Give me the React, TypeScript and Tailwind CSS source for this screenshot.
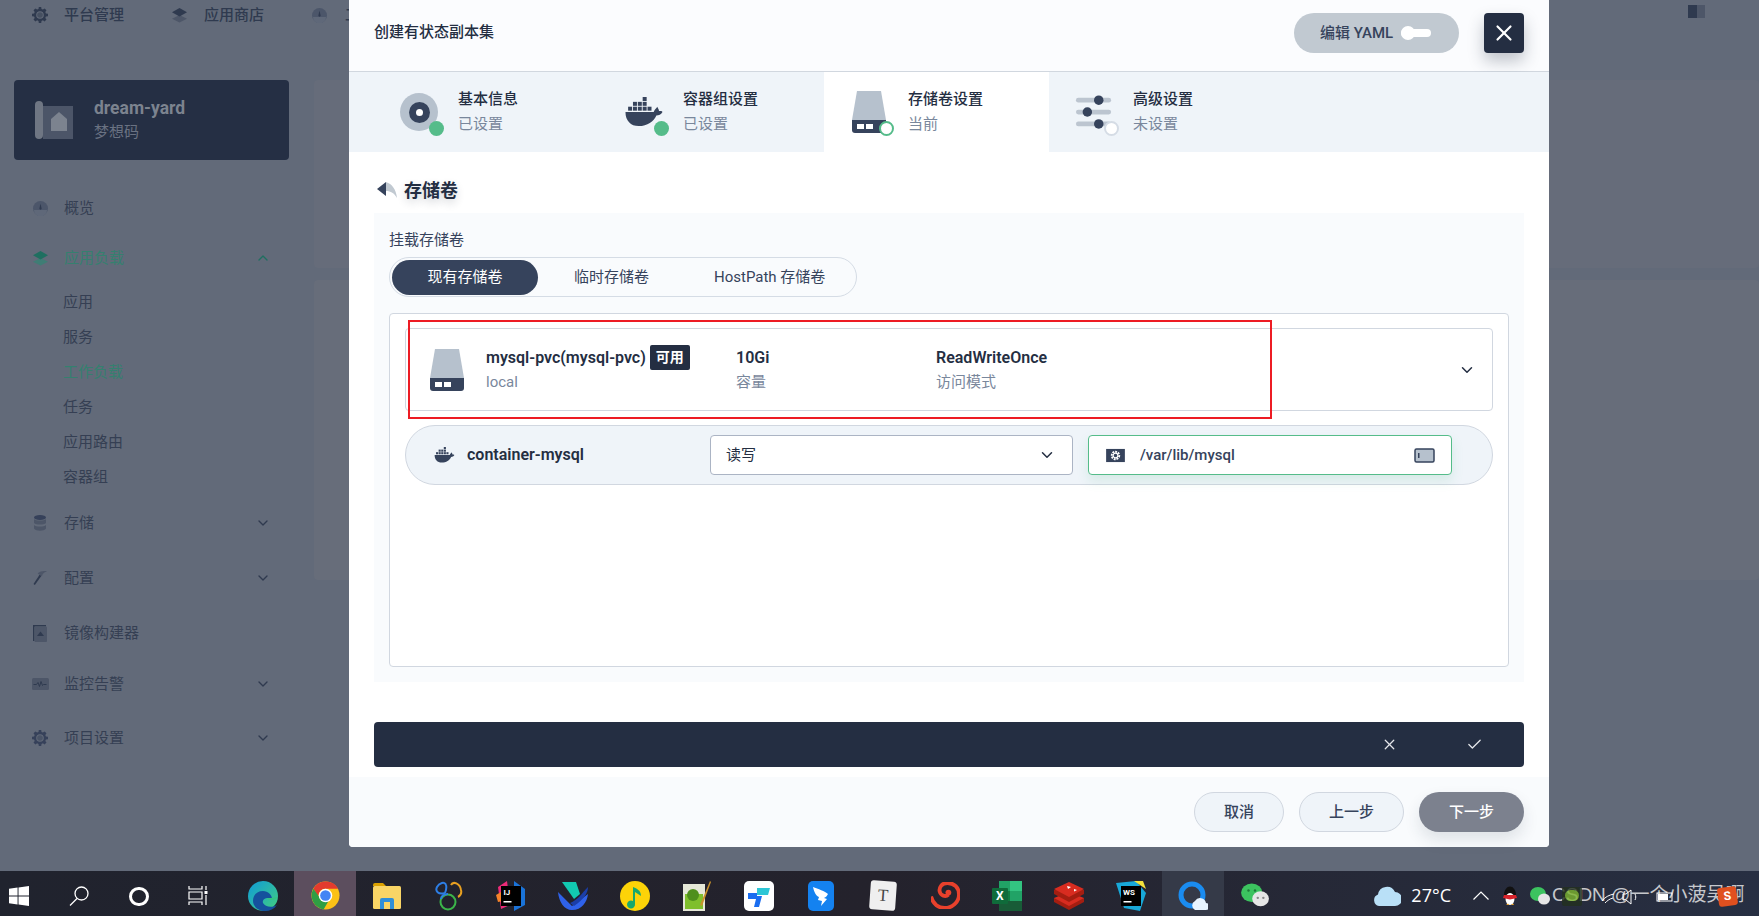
import { ChevronDown, ChevronUp, X, Check } from "lucide-react"

const subNav = [
  { label: "应用" },
  { label: "服务" },
  { label: "工作负载", active: true },
  { label: "任务" },
  { label: "应用路由" },
  { label: "容器组" },
]

function Gear({ className }: { className: string }) {
  return (
    <svg viewBox="0 0 16 16" className={className} fill="currentColor">
      <path fillRule="evenodd" d="M6.8 0h2.4l.3 2 1.4.6L12.600 1.400l1.900 1.900-1.200 1.700.6 1.400 2.100.4v2.400l-2.100.3-.6 1.400 1.200 1.700-1.900 1.900-1.700-1.200-1.400.6-.3 2.100H6.800l-.3-2.100-1.400-.6-1.700 1.200-1.900-1.900 1.200-1.700-.6-1.400L0 9.200V6.800l2.100-.4.6-1.400-1.200-1.700 1.900-1.900 1.700 1.200 1.400-.6zM8 4.200a3.800 3.800 0 100 7.600 3.800 3.800 0 000-7.600z" />
      <circle cx="8" cy="8" r="2.800" opacity=".55" />
    </svg>
  )
}

function Layers({ top, bottom }: { top: string; bottom: string }) {
  return (
    <svg viewBox="0 0 16 16" className="w-[15px] h-[15px] shrink-0">
      <path d="M8 7.500L16 11.500 8 15.500 0 11.500z" fill={bottom} />
      <path d="M8 0L16 4.500 8 9 0 4.500z" fill={top} />
    </svg>
  )
}

function Dial() {
  return (
    <svg viewBox="0 0 16 16" className="w-[15px] h-[15px] shrink-0">
      <circle cx="8" cy="8" r="8" fill="#4c566a" />
      <path d="M1 9.500h14a7 7 0 01-14 0z" fill="#5f6879" />
      <path d="M8 3l1.200 5a1.200 1.200 0 11-2.400 0z" fill="#2f3a4f" />
    </svg>
  )
}

function Docker({ className, fill = "#36435c" }: { className: string; fill?: string }) {
  return (
    <svg viewBox="0 0 44 34" className={className} fill={fill}>
      <path d="M1 17h32c1-3 3-4 4-6 1 2 2 3 2 5 2 0 3 0 4 1-2 3-4 4-7 4-3 7-10 12-20 12C7 33 1 27 1 17z" />
      <rect x="4" y="11" width="4.500" height="4.500" />
      <rect x="9.500" y="11" width="4.500" height="4.500" />
      <rect x="15" y="11" width="4.500" height="4.500" />
      <rect x="20.500" y="11" width="4.500" height="4.500" />
      <rect x="26" y="11" width="4.500" height="4.500" />
      <rect x="9.500" y="5.500" width="4.500" height="4.500" />
      <rect x="15" y="5.500" width="4.500" height="4.500" />
      <rect x="20.500" y="5.500" width="4.500" height="4.500" />
      <rect x="20.500" y="0" width="4.500" height="4.500" />
    </svg>
  )
}

function Disk({ className }: { className: string }) {
  return (
    <svg viewBox="0 0 34 42" className={className}>
      <path d="M5 0h24l5 29H0z" fill="#b6c1cd" />
      <path d="M0 29h34v10a3 3 0 01-3 3H3a3 3 0 01-3-3z" fill="#36435c" />
      <rect x="5" y="33" width="7" height="5" fill="#fff" />
      <rect x="14" y="33" width="7" height="5" fill="#fff" />
    </svg>
  )
}

function Sliders() {
  return (
    <svg viewBox="0 0 40 36" className="w-[38px] h-[36px]">
      <rect x="1" y="3" width="37" height="5" rx="2.500" fill="#bcc5d0" />
      <rect x="1" y="15.500" width="37" height="5" rx="2.500" fill="#bcc5d0" />
      <rect x="1" y="28" width="37" height="5" rx="2.500" fill="#bcc5d0" />
      <circle cx="25" cy="5.500" r="5" fill="#36435c" />
      <circle cx="13" cy="18" r="5" fill="#36435c" />
      <circle cx="25" cy="30.500" r="5" fill="#36435c" />
    </svg>
  )
}

function Step({
  title,
  sub,
  dot,
  current,
  children,
}: {
  title: string
  sub: string
  dot: "done" | "current" | "todo"
  current?: boolean
  children: React.ReactNode
}) {
  return (
    <div className={`w-[225px] h-full flex items-center pl-[22px] ${current ? "bg-white" : ""}`}>
      <div className="relative w-[46px] h-[46px] flex items-center justify-center mr-[16px]">
        {children}
        {dot === "done" && <span className="absolute right-[-2px] bottom-[-1px] w-[15px] h-[15px] rounded-full bg-[#55bc8a]" />}
        {dot === "current" && <span className="absolute right-[-2px] bottom-[-1px] w-[15px] h-[15px] rounded-full bg-white border-2 border-[#55bc8a]" />}
        {dot === "todo" && <span className="absolute right-[-2px] bottom-[-1px] w-[15px] h-[15px] rounded-full bg-white border-2 border-[#d5dce5]" />}
      </div>
      <div className="mt-[-2px]">
        <div className="text-[15px] leading-[20px] font-medium text-[#242e42]">{title}</div>
        <div className="text-[15px] leading-[20px] mt-[5px] text-[#79879c]">{sub}</div>
      </div>
    </div>
  )
}

function SideItem({ icon, label, open, className = "" }: { icon: React.ReactNode; label: string; open?: boolean; className?: string }) {
  return (
    <div className={`flex items-center pl-[32px] pr-[43px] h-[24px] ${className}`}>
      <div className="w-[16px] h-[16px] flex items-center justify-center text-[#36415a] mr-[16px]">{icon}</div>
      <span className="text-[15px] text-[#353f53]">{label}</span>
      {open !== undefined && <ChevronDown className="ml-auto w-[16px] h-[16px] text-[#2f3a4f]" strokeWidth={2} />}
    </div>
  )
}

function Sidebar() {
  return (
    <aside className="w-[314px] shrink-0">
      <div className="h-[80px] pl-[32px] flex items-start pt-[3px] text-[15px] font-medium text-[#2f3a4f] whitespace-nowrap">
        <div className="flex items-center h-[24px]">
          <Gear className="w-[16px] h-[16px] shrink-0 text-[#2f3a4f] mr-[16px]" />
          <span>平台管理</span>
          <span className="ml-[48px] mr-[17px]">
            <Layers top="#2f3a4f" bottom="#4d5668" />
          </span>
          <span>应用商店</span>
          <span className="ml-[48px] mr-[18px]">
            <Dial />
          </span>
          <span>工作台</span>
        </div>
      </div>
      <div className="mx-[14px] w-[275px] h-[80px] rounded-[4px] bg-[#252f44] flex items-center pl-[21px]">
        <svg viewBox="0 0 38 38" className="w-[38px] h-[38px] mr-[21px]">
          <path d="M8 5h30v33H8z" fill="#4c5568" />
          <path d="M0 4a4 4 0 018 0v30a4 4 0 01-4 4 4 4 0 01-4-4z" fill="#6f7683" />
          <path d="M24 11l8 7v12H16V18z" fill="#7c838f" />
        </svg>
        <div className="mt-[-1px]">
          <div className="text-[17.500px] leading-[22px] font-bold text-[#7c838f]">dream-yard</div>
          <div className="text-[15px] leading-[20px] mt-[3px] text-[#6a7282]">梦想码</div>
        </div>
      </div>
      <SideItem className="mt-[36px]" icon={<Dial />} label="概览" />
      <div className="flex items-center pl-[32px] pr-[43px] h-[24px] mt-[26px]">
        <div className="w-[16px] h-[16px] flex items-center justify-center mr-[16px]">
          <Layers top="#1f6f60" bottom="#3f7d75" />
        </div>
        <span className="text-[15px] text-[#35806f]">应用负载</span>
        <ChevronUp className="ml-auto w-[16px] h-[16px] text-[#1f6f60]" strokeWidth={2} />
      </div>
      <div className="mt-[15px] pl-[63px] flex flex-col">
        {subNav.map((item) => (
          <div key={item.label} className={`h-[35px] flex items-center text-[15px] ${item.active ? "text-[#35806f]" : "text-[#353f53]"}`}>
            {item.label}
          </div>
        ))}
      </div>
      <SideItem
        className="mt-[16px]"
        open={false}
        label="存储"
        icon={
          <svg viewBox="0 0 12 16" className="w-[12px] h-[16px]">
            <ellipse cx="6" cy="2.500" rx="6" ry="2.500" fill="#36415a" />
            <path d="M0 4c2 2 10 2 12 0v4c-2 2-10 2-12 0z" fill="#4d5668" />
            <path d="M0 10c2 2 10 2 12 0v3.500c-2 3-10 3-12 0z" fill="#4d5668" />
          </svg>
        }
      />
      <SideItem
        className="mt-[31px]"
        open={false}
        label="配置"
        icon={
          <svg viewBox="0 0 16 16" className="w-[15px] h-[16px]">
            <path d="M2 15.500l-1.500-1 6.500-10 2 1z" fill="#2f3a4f" />
            <path d="M5 3c3-2.500 7-3 10-2-3 .5-4.500 2-5.500 5L6 4z" fill="#4d5668" />
          </svg>
        }
      />
      <SideItem
        className="mt-[31px]"
        label="镜像构建器"
        icon={
          <svg viewBox="0 0 14 17" className="w-[14px] h-[17px]">
            <path d="M0 0h13v1.500H1.500V16H0z" fill="#2f3a4f" />
            <rect x="1.500" y="1.500" width="12.500" height="15.500" rx="1" fill="#4d5668" />
            <path d="M7.500 6.500l3.500 4.500H4z" fill="#2f3a4f" />
          </svg>
        }
      />
      <SideItem
        className="mt-[27px]"
        open={false}
        label="监控告警"
        icon={
          <svg viewBox="0 0 17 12" className="w-[17px] h-[12px] shrink-0">
            <rect width="17" height="12" rx="1.500" fill="#4d5668" />
            <path d="M1.500 6.500h3l1.500-2 1.500 4 1.500-5 1.500 4 1-1h3" fill="none" stroke="#2f3a4f" strokeWidth="1" />
          </svg>
        }
      />
      <SideItem className="mt-[30px]" open={false} label="项目设置" icon={<Gear className="w-[16px] h-[16px] text-[#36415a]" />} />
    </aside>
  )
}

function TaskIcon({ children, highlight }: { children: React.ReactNode; highlight?: string }) {
  return <div className={`w-[62px] h-full shrink-0 flex items-center justify-center pt-[4px] ${highlight ?? ""}`}>{children}</div>
}

function Taskbar() {
  return (
    <div className="relative h-[45px] shrink-0 flex items-center pl-[232px] bg-gradient-to-r from-[#20232e] via-[#24222c] to-[#272f42] overflow-hidden">
      <div className="absolute left-[9px] top-[15px]">
        <svg viewBox="0 0 21 21" className="w-[20px] h-[20px]" fill="#fff">
          <path d="M0 3l9-1.300v8.300H0zM10 1.500L21 0v10H10zM0 11h9v8.300L0 18zM10 11h11v10l-11-1.500z" />
        </svg>
      </div>
      <div className="absolute left-[69px] top-[15px]">
        <svg viewBox="0 0 20 20" className="w-[20px] h-[20px]" fill="none" stroke="#fff" strokeWidth="1.300">
          <circle cx="12.500" cy="7.500" r="6.500" />
          <path d="M8 12.500L1 19.500" />
        </svg>
      </div>
      <div className="absolute left-[129px] top-[16px] w-[20px] h-[19px] rounded-full border-[3px] border-white" />
      <div className="absolute left-[188px] top-[15px]">
        <svg viewBox="0 0 20 19" className="w-[20px] h-[19px]" fill="none" stroke="#fff" strokeWidth="1.200">
          <path d="M1 0v3h13V0M1 6h13v7H1zM1 19v-3h13v3M18 0v4M18 9v10" />
          <rect x="16.500" y="5" width="3" height="3" fill="#fff" stroke="none" />
        </svg>
      </div>

      {/* Edge */}
      <TaskIcon>
        <svg viewBox="0 0 30 30" className="w-[30px] h-[30px]">
          <defs>
            <linearGradient id="edge" x1="0" y1="0" x2="1" y2="1">
              <stop offset="0" stopColor="#0f9ad8" />
              <stop offset="1" stopColor="#43d07e" />
            </linearGradient>
          </defs>
          <circle cx="15" cy="15" r="15" fill="url(#edge)" />
          <path d="M15 10c-6 0-10 4-10 10 0 5 5 10 12 10 5 0 9-2 12-6-5 3-12 2-14-2-1-3 2-5 5-5 1 0 2 0 4 1 0-4-4-8-9-8z" fill="#15519d" />
          <path d="M19 17c3 0 7 0 10-1-1 3-5 3-8 3z" fill="#33c481" />
        </svg>
      </TaskIcon>
      {/* Chrome */}
      <TaskIcon highlight="bg-[#5c4e5e]">
        <svg viewBox="0 0 30 30" className="w-[29px] h-[29px]">
          <circle cx="15" cy="15" r="14.500" fill="#fbc116" />
          <path d="M15 .500A14.500 14.500 0 002.500 8L9 19a7 7 0 016-11h13A14.500 14.500 0 0015 .500z" fill="#e33b2e" />
          <path d="M2.500 8A14.500 14.500 0 0013 29.400l6.500-11A7 7 0 019 17z" fill="#2f9e44" />
          <circle cx="15" cy="15" r="7" fill="#fff" />
          <circle cx="15" cy="15" r="5.500" fill="#4285f4" />
        </svg>
      </TaskIcon>
      {/* Explorer */}
      <TaskIcon>
        <svg viewBox="0 0 28 26" className="w-[28px] h-[26px]">
          <path d="M0 2a2 2 0 012-2h8l3 3H0z" fill="#dba100" />
          <rect y="3" width="28" height="23" rx="1.500" fill="#f9d566" />
          <path d="M7 26v-9a2 2 0 012-2h10a2 2 0 012 2v9h-4v-7h-6v7z" fill="#2f8fd8" />
        </svg>
      </TaskIcon>
      {/* NetBeans-style ring */}
      <TaskIcon>
        <svg viewBox="0 0 28 30" className="w-[28px] h-[30px]" fill="none" strokeWidth="2">
          <path d="M10 12C3 14 0 10 2 6s8-6 9-2c1 3-1 8-1 8" stroke="#2d7ee5" />
          <path d="M16 4c2-4 9-2 10 5 1 4-1 6-3 7" stroke="#e8a021" />
          <circle cx="13" cy="21" r="7.500" stroke="#3bb54a" />
          <path d="M6 18c0-3 3-5 7-5" stroke="#2d7ee5" />
        </svg>
      </TaskIcon>
      {/* IntelliJ */}
      <TaskIcon>
        <svg viewBox="0 0 30 30" className="w-[30px] h-[30px]">
          <path d="M2 6l9-6 3 24-9 4z" fill="#ec2a77" />
          <path d="M0 14l5-3 2 9-5 1z" fill="#f5822a" />
          <path d="M18 0l11 8v16l-11 6z" fill="#1a73d8" />
          <rect x="5" y="5" width="20" height="20" fill="#000" />
          <text x="7.500" y="14" fontSize="8" fontWeight="700" fill="#fff" fontFamily="Roboto">IJ</text>
          <rect x="7.500" y="20" width="8" height="1.500" fill="#fff" />
        </svg>
      </TaskIcon>
      {/* Feishu-like bird */}
      <TaskIcon>
        <svg viewBox="0 0 30 28" className="w-[30px] h-[28px]">
          <path d="M4 0h14l4 12-6 5z" fill="#12c9b1" />
          <path d="M0 10l14 14 16-12c-1 8-6 16-16 16C6 28 1 20 0 10z" fill="#2f62ea" />
          <path d="M30 5c0 6-4 12-14 19l-4-3c8-3 12-10 18-16z" fill="#1b3ea8" />
        </svg>
      </TaskIcon>
      {/* QQ music */}
      <TaskIcon>
        <svg viewBox="0 0 30 30" className="w-[30px] h-[30px]">
          <circle cx="15" cy="15" r="15" fill="#fcd308" />
          <path d="M13 6v14a4 4 0 102 3V11l6 4c0-5-3-7-8-9z" fill="#18a86b" />
        </svg>
      </TaskIcon>
      {/* Notepad++ */}
      <TaskIcon>
        <svg viewBox="0 0 28 30" className="w-[28px] h-[30px]">
          <rect x="0" y="3" width="22" height="27" fill="#e6e8d8" />
          <rect x="2" y="13" width="18" height="15" fill="#7fbf2c" />
          <circle cx="10" cy="14" r="6" fill="#4f8f1c" />
          <path d="M27 0l1 1-9 24-2-1z" fill="#c8912b" />
        </svg>
      </TaskIcon>
      {/* ToDesk */}
      <TaskIcon>
        <div className="w-[30px] h-[30px] rounded-[5px] bg-white flex items-center justify-center">
          <svg viewBox="0 0 22 22" className="w-[22px] h-[22px]">
            <path d="M9 3h13l-2 7H9z" fill="#2dc6d6" />
            <path d="M0 8h9v3h5l-3 11H6l2-8H0z" fill="#1a6df0" />
          </svg>
        </div>
      </TaskIcon>
      {/* DingTalk */}
      <TaskIcon>
        <div className="w-[26px] h-[30px] rounded-[5px] bg-[#1482f0] flex items-center justify-center">
          <svg viewBox="0 0 16 20" className="w-[16px] h-[20px]" fill="#fff">
            <path d="M0 1c5 2 12 4 15 7-1 2-2 3-4 4l3 1-6 7 1-5-4-1 1-3C3 10 1 6 0 1z" />
          </svg>
        </div>
      </TaskIcon>
      {/* Typora */}
      <TaskIcon>
        <div className="w-[26px] h-[29px] rounded-[3px] bg-[#efefef] rotate-[4deg] flex items-center justify-center text-[#444] text-[17px] font-[family-name:'Liberation_Serif',serif]">
          T
        </div>
      </TaskIcon>
      {/* Swirl */}
      <TaskIcon>
        <svg viewBox="0 0 30 28" className="w-[29px] h-[27px]" fill="none">
          <path d="M0 15c2 8 8 12 14 12 8 0 15-6 15-14 0-7-5-12-12-12-6 0-9 5-8 9s6 6 9 3" stroke="#e8412c" strokeWidth="4" />
          <circle cx="18" cy="11" r="3" fill="#e8412c" />
        </svg>
      </TaskIcon>
      {/* Excel */}
      <TaskIcon>
        <svg viewBox="0 0 30 30" className="w-[30px] h-[30px]">
          <rect x="7" y="0" width="23" height="30" rx="1" fill="#107c41" />
          <rect x="18" y="0" width="12" height="10" fill="#33c481" />
          <rect x="7" y="0" width="11" height="10" fill="#21a366" />
          <rect x="18" y="10" width="12" height="10" fill="#21a366" />
          <rect x="7" y="20" width="23" height="10" fill="#185c37" />
          <rect x="0" y="7" width="16" height="16" rx="1" fill="#0f6b3a" />
          <text x="4" y="19" fontSize="12" fontWeight="700" fill="#fff" fontFamily="Roboto">X</text>
        </svg>
      </TaskIcon>
      {/* Redis */}
      <TaskIcon>
        <svg viewBox="0 0 30 28" className="w-[30px] h-[28px]">
          <path d="M0 20l15 8 15-8v-4H0z" fill="#a41e11" />
          <path d="M0 16l15-6 15 6-15 8z" fill="#d82c20" />
          <path d="M0 12l15 8 15-8V8H0z" fill="#a41e11" />
          <path d="M0 7l15-7 15 7-15 8z" fill="#d82c20" />
          <path d="M13 4l4 1-3 2zM20 7l3 1-3 1.500z" fill="#fff" />
        </svg>
      </TaskIcon>
      {/* WebStorm */}
      <TaskIcon>
        <svg viewBox="0 0 30 30" className="w-[30px] h-[30px]">
          <path d="M0 2l20-2 10 12-6 18-16-3z" fill="#18a8d8" />
          <path d="M18 0h9l3 8z" fill="#f4e23c" />
          <rect x="5" y="5" width="20" height="20" fill="#000" />
          <text x="7" y="14" fontSize="8" fontWeight="700" fill="#fff" fontFamily="Roboto">WS</text>
          <rect x="7.500" y="20" width="8" height="1.500" fill="#fff" />
        </svg>
      </TaskIcon>
      {/* QQ browser */}
      <TaskIcon highlight="bg-[#353a48]">
        <svg viewBox="0 0 30 30" className="w-[30px] h-[30px]">
          <circle cx="14" cy="14" r="11" fill="none" stroke="#1a8cf0" strokeWidth="5" />
          <path d="M17 29a5 5 0 010-9 6 6 0 0111 2 3.500 3.500 0 010 7z" fill="#e8f4ff" />
        </svg>
      </TaskIcon>
      {/* WeChat */}
      <TaskIcon>
        <svg viewBox="0 0 30 28" className="w-[30px] h-[26px]">
          <ellipse cx="11.500" cy="10.500" rx="11.500" ry="10" fill="#3cc35f" />
          <ellipse cx="21" cy="17" rx="9" ry="8" fill="#e6e6e6" />
          <circle cx="18" cy="16" r="1.300" fill="#888" />
          <circle cx="24" cy="16" r="1.300" fill="#888" />
          <circle cx="8" cy="8" r="1.300" fill="#1e7a38" />
          <circle cx="15" cy="8" r="1.300" fill="#1e7a38" />
        </svg>
      </TaskIcon>

      <div className="ml-auto flex items-center h-full pr-[9px] pt-[4px]">
        <svg viewBox="0 0 28 20" className="w-[28px] h-[20px] mr-[10px]">
          <path d="M6 20a6 6 0 01-1-11.500A9 9 0 0122 6a7 7 0 010 14z" fill="#b9e0f7" />
        </svg>
        <span className="text-[18px] text-white mr-[22px] font-[family-name:'Open_Sans',sans-serif]">27°C</span>
        <svg viewBox="0 0 16 9" className="w-[16px] h-[9px] mr-[13px]" fill="none" stroke="#fff" strokeWidth="1.200">
          <path d="M0.500 8.500L8 1l7.500 7.500" />
        </svg>
        <svg viewBox="0 0 16 20" className="w-[16px] h-[20px] mr-[12px]">
          <ellipse cx="8" cy="9" rx="6" ry="8.500" fill="#111" />
          <ellipse cx="8" cy="13" rx="4.500" ry="6" fill="#fff" />
          <path d="M2 9h12l1 3-7 1.500L1 12z" fill="#d9232b" />
          <path d="M4 19h3l-1-1.500zM9 19h3l-1-1.500z" fill="#f7a823" />
        </svg>
        <svg viewBox="0 0 20 18" className="w-[20px] h-[18px] mr-[2px]">
          <ellipse cx="8" cy="7" rx="8" ry="7" fill="#3cc35f" />
          <ellipse cx="14" cy="12" rx="6" ry="5.500" fill="#e6e6e6" />
        </svg>
        <div className="relative w-[198px] h-full flex items-center">
          <span className="text-[19px] whitespace-nowrap text-[#c6c8cc] font-[family-name:'Liberation_Sans','Noto_Sans_CJK_SC',sans-serif]">
            CSDN @一个小菠吴啊
          </span>
          <div className="absolute left-[10px] top-[12px] w-[20px] h-[19px] bg-[#23301f] rounded-[2px] opacity-80">
            <div className="w-[14px] h-[11px] m-[3px] rounded-full bg-[#7db52f]" />
          </div>
          <svg viewBox="0 0 72 16" className="absolute left-[50px] top-[14px] w-[72px] h-[16px]" fill="none" stroke="#fff" strokeWidth="1">
            <path d="M0 12c3-4 7-6 12-7M3 14c2-2 4-4 8-5" />
            <path d="M21 5h3l5-4v14l-5-4h-3z" />
            <path d="M33 5c1 2 1 4 0 6" />
            <rect x="55" y="4" width="15" height="8" />
            <rect x="56" y="5" width="10" height="6" fill="#fff" stroke="none" />
          </svg>
          <div className="absolute left-[166px] top-[12px] w-[19px] h-[19px] rounded-[3px] bg-[#e0501f] text-white text-[12px] leading-[19px] text-center font-bold rotate-[-8deg]">
            S
          </div>
        </div>
      </div>
    </div>
  )
}

function Modal() {
  return (
    <div className="absolute left-[349px] top-0 w-[1200px] h-[847px] bg-white rounded-b-[4px] flex flex-col">
      <header className="h-[72px] shrink-0 bg-[#fbfcfe] border-b border-[#d1d7df] flex items-start pt-[13px] px-[25px]">
        <span className="text-[15px] leading-[38px] font-medium text-[#242e42]">创建有状态副本集</span>
        <div className="ml-auto w-[165px] h-[40px] rounded-full bg-[#c1c9d1] flex items-center pl-[26px] text-[15px] font-medium text-[#36435c]">
          编辑 YAML
          <span className="relative ml-[8px] w-[30px] h-[8px] rounded-full bg-white">
            <span className="absolute left-0 top-[-3px] w-[14px] h-[14px] rounded-full bg-white" />
          </span>
        </div>
        <button className="ml-[25px] w-[40px] h-[40px] rounded-[4px] bg-[#242e42] flex items-center justify-center shadow-[0_8px_16px_rgba(36,46,66,0.28)]">
          <X className="w-[26px] h-[26px] text-white" strokeWidth={2} />
        </button>
      </header>

      <div className="h-[80px] shrink-0 bg-[#eff4f9] flex pl-[25px]">
        <Step title="基本信息" sub="已设置" dot="done">
          <div className="w-[38px] h-[38px] rounded-full bg-[#b6c1cd] flex items-center justify-center">
            <div className="w-[21px] h-[21px] rounded-full bg-[#36435c] flex items-center justify-center">
              <div className="w-[7px] h-[7px] rounded-full bg-white" />
            </div>
          </div>
        </Step>
        <Step title="容器组设置" sub="已设置" dot="done">
          <Docker className="w-[44px] h-[30px]" />
        </Step>
        <Step title="存储卷设置" sub="当前" dot="current" current>
          <Disk className="w-[34px] h-[42px]" />
        </Step>
        <Step title="高级设置" sub="未设置" dot="todo">
          <Sliders />
        </Step>
      </div>

      <div className="flex-1 px-[25px] pt-[26px]">
        <div className="flex items-center h-[24px] [text-shadow:0_4px_8px_rgba(36,46,66,0.2)]">
          <svg viewBox="0 0 20 16" className="ml-[3px] w-[20px] h-[16px] mr-[7px]">
            <path d="M9 0C15 2 19 7 20 16 17 11 14 9 9 9z" fill="#c1c9d1" />
            <path d="M9 0v14L0 7z" fill="#36435c" />
          </svg>
          <span className="text-[18px] font-bold text-[#242e42]">存储卷</span>
        </div>

        <div className="h-[469px] mt-[11px] bg-[#f9fbfd] px-[15px] pt-[17px]">
          <div className="text-[15px] leading-[20px] text-[#36435c]">挂载存储卷</div>
          <div className="mt-[7px] w-[468px] h-[40px] rounded-full border border-[#d5dce5] flex items-center p-[2px] text-[15px] text-[#36435c]">
            <div className="w-[146px] h-[35px] rounded-full bg-[#36435c] text-white flex items-center justify-center">现有存储卷</div>
            <div className="ml-[36px]">临时存储卷</div>
            <div className="ml-[65px]">HostPath 存储卷</div>
          </div>

          <div className="relative mt-[16px] h-[354px] bg-white border border-[#d1d7e0] rounded-[4px] px-[15px] pt-[14px]">
            <div className="h-[83px] border border-[#d1d7e0] rounded-[4px] flex items-center pl-[24px] pr-[16px]">
              <Disk className="w-[34px] h-[42px] mr-[22px]" />
              <div className="w-[250px] mt-[-2px]">
                <div className="flex items-center h-[25px]">
                  <span className="text-[16px] font-semibold text-[#242e42]">mysql-pvc(mysql-pvc)</span>
                  <span className="ml-[4px] w-[40px] h-[25px] rounded-[2px] bg-[#242e42] text-white text-[14px] font-bold flex items-center justify-center">可用</span>
                </div>
                <div className="text-[15px] leading-[20px] mt-[2px] text-[#79879c]">local</div>
              </div>
              <div className="w-[200px] mt-[-2px]">
                <div className="h-[25px] flex items-center text-[16px] font-semibold text-[#242e42]">10Gi</div>
                <div className="text-[15px] leading-[20px] mt-[2px] text-[#79879c]">容量</div>
              </div>
              <div className="mt-[-2px]">
                <div className="h-[25px] flex items-center text-[16px] font-semibold text-[#242e42]">ReadWriteOnce</div>
                <div className="text-[15px] leading-[20px] mt-[2px] text-[#79879c]">访问模式</div>
              </div>
              <ChevronDown className="ml-auto w-[18px] h-[18px] text-[#242e42]" strokeWidth={2} />
            </div>

            <div className="mt-[14px] h-[60px] rounded-full bg-[#eff4f9] border border-[#d1d7e0] flex items-center pl-[28px]">
              <Docker className="w-[21px] h-[16px] mr-[12px]" />
              <span className="w-[243px] text-[16px] font-semibold text-[#242e42]">container-mysql</span>
              <div className="w-[363px] h-[40px] rounded-[4px] bg-white border border-[#abb4c4] flex items-center pl-[15px] pr-[16px] text-[15px] text-[#242e42]">
                读写
                <ChevronDown className="ml-auto w-[18px] h-[18px] text-[#242e42]" strokeWidth={2} />
              </div>
              <div className="ml-[15px] w-[364px] h-[40px] rounded-[4px] bg-white border border-[#55bc8a] flex items-center pl-[17px] pr-[16px] text-[15px] font-medium text-[#36435c] shadow-[0_6px_12px_rgba(85,188,138,0.16)]">
                <svg viewBox="0 0 20 16" className="w-[19px] h-[15px] mr-[15px]">
                  <rect x="0" y="1" width="20" height="14" fill="#36435c" />
                  <circle cx="10" cy="8" r="4" fill="none" stroke="#fff" strokeWidth="2" strokeDasharray="2 1" />
                  <circle cx="10" cy="8" r="2.500" fill="none" stroke="#fff" strokeWidth="1.200" />
                </svg>
                /var/lib/mysql
                <svg viewBox="0 0 21 15" className="ml-auto w-[21px] h-[15px]">
                  <rect x="1" y="1" width="19" height="13" rx="1.500" fill="#b6c1cd" stroke="#36435c" strokeWidth="1.500" />
                  <rect x="4" y="5" width="1.500" height="5" fill="#36435c" />
                </svg>
              </div>
            </div>

            {/* red annotation drawn over the screenshot */}
            <div className="absolute left-[18px] top-[6px] w-[864px] h-[99px] border-2 border-[#ed1c24] pointer-events-none" />
          </div>
        </div>

        <div className="mt-[40px] h-[45px] rounded-[4px] bg-[#242e42] flex items-center justify-end text-white">
          <X className="w-[17px] h-[17px] mr-[68px] text-[#e4e6ea]" strokeWidth={1.800} />
          <Check className="w-[17px] h-[17px] mr-[41px] text-[#e4e6ea]" strokeWidth={1.800} />
        </div>
      </div>

      <footer className="h-[70px] shrink-0 bg-[#f9fbfd] rounded-b-[4px] flex items-center justify-end pr-[25px] gap-[15px] text-[15px] font-medium">
        <button className="w-[90px] h-[40px] rounded-full bg-[#eff4f9] border border-[#d1d7e0] text-[#36435c]">取消</button>
        <button className="w-[105px] h-[40px] rounded-full bg-[#eff4f9] border border-[#d1d7e0] text-[#36435c]">上一步</button>
        <button className="w-[105px] h-[40px] rounded-full bg-[#7c818e] text-white shadow-[0_8px_16px_rgba(36,46,66,0.12)]">下一步</button>
      </footer>
    </div>
  )
}

export default function App() {
  return (
    <div className="relative w-[1759px] h-[916px] overflow-hidden flex flex-col bg-[#626a79] font-[family-name:Roboto,'Noto_Sans_CJK_SC',sans-serif]">
      <div className="flex-1 flex min-h-0">
        <Sidebar />
        <main className="flex-1 pt-[80px]">
          <div className="h-[188px] bg-[#666c7a] rounded-[4px]" />
          <div className="h-[300px] mt-[12px] bg-[#676d7a] rounded-[4px]" />
        </main>
      </div>
      <Taskbar />
      <Modal />
      <div className="absolute left-[1688px] top-[5px] flex">
        <span className="w-[9px] h-[13px] bg-[#2f3a4f]" />
        <span className="w-[8px] h-[13px] bg-[#4d5668]" />
      </div>
    </div>
  )
}
